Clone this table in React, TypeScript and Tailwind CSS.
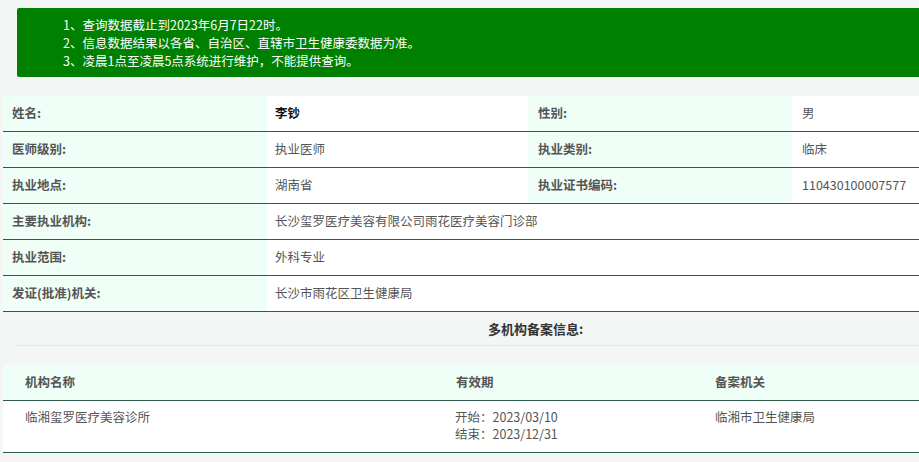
import React from "react";

const font = { fontFamily: '"Noto Sans CJK SC", "Noto Sans", sans-serif' };

const rowBorder = "border-b border-[#2d5b4b]";

function Row4({ l1, v1, l2, v2, bold }: { l1: string; v1: string; l2: string; v2: string; bold?: boolean }) {
  return (
    <div className={`flex h-[36px] ${rowBorder}`}>
      <div className="w-[264px] shrink-0 bg-[#effff7] pl-[9px] flex items-center font-bold text-[#555]">{l1}</div>
      <div className={`w-[261px] shrink-0 bg-white pl-[8px] flex items-center ${bold ? "font-bold text-[#111]" : "text-[#555]"}`}>{v1}</div>
      <div className="w-[264px] shrink-0 bg-[#effff7] pl-[10px] flex items-center font-bold text-[#555]">{l2}</div>
      <div className="flex-1 bg-white pl-[10px] flex items-center text-[#555]">{v2}</div>
    </div>
  );
}

function Row2({ l, v }: { l: string; v: string }) {
  return (
    <div className={`flex h-[36px] ${rowBorder}`}>
      <div className="w-[264px] shrink-0 bg-[#effff7] pl-[9px] flex items-center font-bold text-[#555]">{l}</div>
      <div className="flex-1 bg-white pl-[8px] flex items-center text-[#555]">{v}</div>
    </div>
  );
}

export default function App() {
  return (
    <div className="w-[919px] h-[462px] overflow-hidden bg-[#f4f5f5] text-[12.5px]" style={font}>
      <div className="w-[1056px]">
        <div className="ml-[17px] mt-[8px] bg-[#008000] rounded-[2px] pt-[8px] pb-[7px] pl-[46px] text-white leading-[18px]">
          <div>1、查询数据截止到2023年6月7日22时。</div>
          <div>2、信息数据结果以各省、自治区、直辖市卫生健康委数据为准。</div>
          <div>3、凌晨1点至凌晨5点系统进行维护，不能提供查询。</div>
        </div>
        <div className="ml-[3px] mt-[19px]">
          <Row4 l1="姓名:" v1="李钞" l2="性别:" v2="男" bold />
          <Row4 l1="医师级别:" v1="执业医师" l2="执业类别:" v2="临床" />
          <Row4 l1="执业地点:" v1="湖南省" l2="执业证书编码:" v2="110430100007577" />
          <Row2 l="主要执业机构:" v="长沙玺罗医疗美容有限公司雨花医疗美容门诊部" />
          <Row2 l="执业范围:" v="外科专业" />
          <Row2 l="发证(批准)机关:" v="长沙市雨花区卫生健康局" />
        </div>
        <div className="ml-[15px] h-[34px] border-b border-[#e6e8e8] flex items-center justify-center font-bold text-[#333] text-[13px]">
          多机构备案信息:
        </div>
        <div className="ml-[3px] mt-[19px]">
          <div className={`flex h-[36px] bg-[#effff7] font-bold text-[#555] ${rowBorder}`}>
            <div className="w-[431px] shrink-0 pl-[22px] flex items-center">机构名称</div>
            <div className="w-[259px] shrink-0 pl-[22px] flex items-center">有效期</div>
            <div className="flex-1 pl-[22px] flex items-center">备案机关</div>
          </div>
          <div className={`flex bg-white text-[#555] leading-[17px] pt-[7px] pb-[10px] ${rowBorder}`}>
            <div className="w-[431px] shrink-0 pl-[22px]">临湘玺罗医疗美容诊所</div>
            <div className="w-[259px] shrink-0 pl-[21px]">
              <div>开始：2023/03/10</div>
              <div>结束：2023/12/31</div>
            </div>
            <div className="flex-1 pl-[22px]">临湘市卫生健康局</div>
          </div>
        </div>
      </div>
    </div>
  );
}
